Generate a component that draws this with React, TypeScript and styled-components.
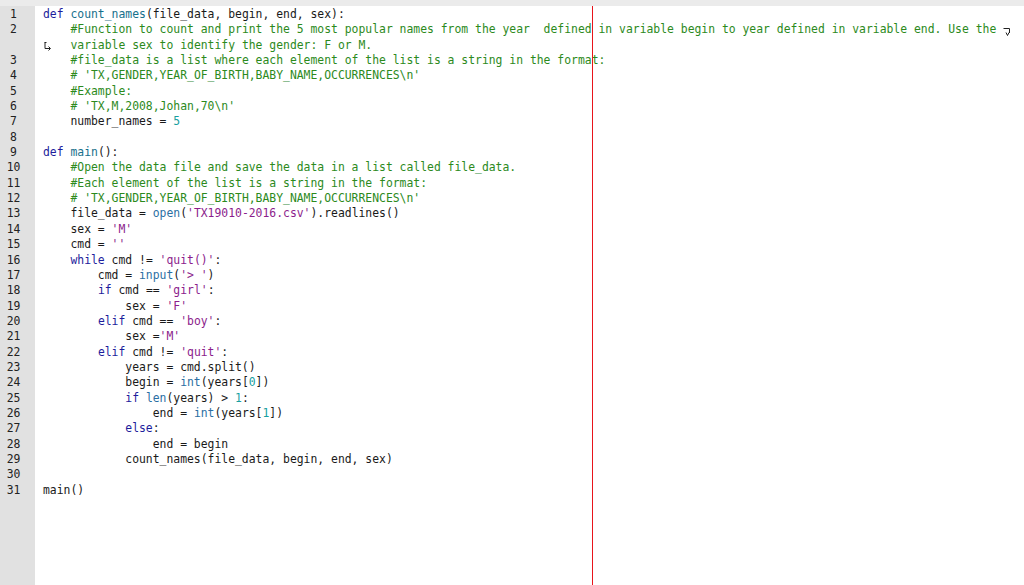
import React from "react";
import styled, { createGlobalStyle } from "styled-components";

const Global = createGlobalStyle`
  html, body { margin: 0; padding: 0; background: #ffffff; }
  #root { height: 585px; }
`;

type Kind = "p" | "kw" | "fn" | "cm" | "st" | "nu" | "bi";
type Seg = [Kind, string];
type Row = { num?: number; segs: Seg[]; wrapEnd?: boolean; wrapStart?: boolean };

const colors: Record<Kind, string> = {
  p: "#1a1a1a",
  kw: "#1d1d9c",
  fn: "#17708c",
  cm: "#2c8a1c",
  st: "#8c1d8c",
  nu: "#17a0a0",
  bi: "#2b6fa3",
};

const rows: Row[] = [
  { num: 1, segs: [["kw", "def"], ["p", " "], ["fn", "count_names"], ["p", "(file_data, begin, end, sex):"]] },
  {
    num: 2,
    segs: [
      ["p", "    "],
      ["cm", "#Function to count and print the 5 most popular names from the year  defined in variable begin to year defined in variable end. Use the "],
    ],
    wrapEnd: true,
  },
  { wrapStart: true, segs: [["cm", "variable sex to identify the gender: F or M."]] },
  { num: 3, segs: [["p", "    "], ["cm", "#file_data is a list where each element of the list is a string in the format:"]] },
  { num: 4, segs: [["p", "    "], ["cm", "# 'TX,GENDER,YEAR_OF_BIRTH,BABY_NAME,OCCURRENCES\\n'"]] },
  { num: 5, segs: [["p", "    "], ["cm", "#Example:"]] },
  { num: 6, segs: [["p", "    "], ["cm", "# 'TX,M,2008,Johan,70\\n'"]] },
  { num: 7, segs: [["p", "    number_names = "], ["nu", "5"]] },
  { num: 8, segs: [] },
  { num: 9, segs: [["kw", "def"], ["p", " "], ["fn", "main"], ["p", "():"]] },
  { num: 10, segs: [["p", "    "], ["cm", "#Open the data file and save the data in a list called file_data."]] },
  { num: 11, segs: [["p", "    "], ["cm", "#Each element of the list is a string in the format:"]] },
  { num: 12, segs: [["p", "    "], ["cm", "# 'TX,GENDER,YEAR_OF_BIRTH,BABY_NAME,OCCURRENCES\\n'"]] },
  { num: 13, segs: [["p", "    file_data = "], ["bi", "open"], ["p", "("], ["st", "'TX19010-2016.csv'"], ["p", ").readlines()"]] },
  { num: 14, segs: [["p", "    sex = "], ["st", "'M'"]] },
  { num: 15, segs: [["p", "    cmd = "], ["st", "''"]] },
  { num: 16, segs: [["p", "    "], ["kw", "while"], ["p", " cmd != "], ["st", "'quit()'"], ["p", ":"]] },
  { num: 17, segs: [["p", "        cmd = "], ["bi", "input"], ["p", "("], ["st", "'> '"], ["p", ")"]] },
  { num: 18, segs: [["p", "        "], ["kw", "if"], ["p", " cmd == "], ["st", "'girl'"], ["p", ":"]] },
  { num: 19, segs: [["p", "            sex = "], ["st", "'F'"]] },
  { num: 20, segs: [["p", "        "], ["kw", "elif"], ["p", " cmd == "], ["st", "'boy'"], ["p", ":"]] },
  { num: 21, segs: [["p", "            sex ="], ["st", "'M'"]] },
  { num: 22, segs: [["p", "        "], ["kw", "elif"], ["p", " cmd != "], ["st", "'quit'"], ["p", ":"]] },
  { num: 23, segs: [["p", "            years = cmd.split()"]] },
  { num: 24, segs: [["p", "            begin = "], ["bi", "int"], ["p", "(years["], ["nu", "0"], ["p", "])"]] },
  { num: 25, segs: [["p", "            "], ["kw", "if"], ["p", " "], ["bi", "len"], ["p", "(years) > "], ["nu", "1"], ["p", ":"]] },
  { num: 26, segs: [["p", "                end = "], ["bi", "int"], ["p", "(years["], ["nu", "1"], ["p", "])"]] },
  { num: 27, segs: [["p", "            "], ["kw", "else"], ["p", ":"]] },
  { num: 28, segs: [["p", "                end = begin"]] },
  { num: 29, segs: [["p", "            count_names(file_data, begin, end, sex)"]] },
  { num: 30, segs: [] },
  { num: 31, segs: [["p", "main()"]] },
];

const LINE_H = "15.35px";

const Page = styled.div`
  display: flex;
  flex-direction: column;
  width: 1024px;
  height: 585px;
  overflow: hidden;
  background: #ffffff;
`;

const TopBar = styled.div`
  height: 6px;
  flex: none;
  background: #ebebeb;
`;

const Editor = styled.div`
  position: relative;
  display: flex;
  flex: 1;
  min-height: 0;
`;

const Gutter = styled.div`
  width: 35px;
  flex: none;
  background: #e1e1e1;
  display: flex;
  flex-direction: column;
  padding-top: 1px;
`;

const LineNum = styled.div`
  height: ${LINE_H};
  line-height: ${LINE_H};
  width: 27px;
  text-align: center;
  font-family: "DejaVu Sans Mono", "Liberation Mono", monospace;
  font-size: 11.4px;
  color: #222222;
`;

const Code = styled.div`
  flex: 1;
  padding-left: 8px;
  padding-top: 1px;
  display: flex;
  flex-direction: column;
`;

const CodeLine = styled.div`
  height: ${LINE_H};
  line-height: ${LINE_H};
  white-space: pre;
  font-family: "DejaVu Sans Mono", "Liberation Mono", monospace;
  font-size: 11.4px;
  color: #1a1a1a;
  display: flex;
  align-items: center;
`;

const Tok = styled.span<{ $kind: Kind }>`
  color: ${(p) => colors[p.$kind]};
`;

const WrapLead = styled.span`
  display: inline-flex;
  align-items: center;
  width: 27.45px;
  height: ${LINE_H};
`;

const WrapTail = styled.span`
  display: inline-flex;
  align-items: center;
  height: ${LINE_H};
`;

const Margin = styled.div`
  position: absolute;
  top: 0;
  bottom: 0;
  left: 592px;
  width: 1px;
  background: #e8141b;
`;

const WrapInIcon = () => (
  <svg width="8" height="10" viewBox="0 0 8 10" style={{ marginLeft: 1, marginTop: 3 }}>
    <path d="M0.5 0.5 H2.5 M1 0.5 V6.5 H6" stroke="#222" strokeWidth="1" fill="none" />
    <path d="M4.5 4.5 L6.5 6.5 L4.5 8.5" stroke="#222" strokeWidth="1" fill="none" />
  </svg>
);

const WrapOutIcon = () => (
  <svg width="8" height="10" viewBox="0 0 8 10" style={{ marginTop: 4 }}>
    <path d="M0.5 1.5 H6.5 V6" stroke="#222" strokeWidth="1" fill="none" />
    <path d="M3 5.5 L4.5 8.5 L6 5.5" stroke="#222" strokeWidth="1" fill="none" />
  </svg>
);

export default function App() {
  return (
    <>
      <Global />
      <Page>
        <TopBar />
        <Editor>
          <Gutter>
            {rows.map((r, i) => (
              <LineNum key={i}>{r.num ?? ""}</LineNum>
            ))}
          </Gutter>
          <Code>
            {rows.map((r, i) => (
              <CodeLine key={i}>
                {r.wrapStart && (
                  <WrapLead>
                    <WrapInIcon />
                  </WrapLead>
                )}
                {r.segs.map(([k, t], j) => (
                  <Tok key={j} $kind={k}>
                    {t}
                  </Tok>
                ))}
                {r.wrapEnd && (
                  <WrapTail>
                    <WrapOutIcon />
                  </WrapTail>
                )}
              </CodeLine>
            ))}
          </Code>
          <Margin />
        </Editor>
      </Page>
    </>
  );
}
